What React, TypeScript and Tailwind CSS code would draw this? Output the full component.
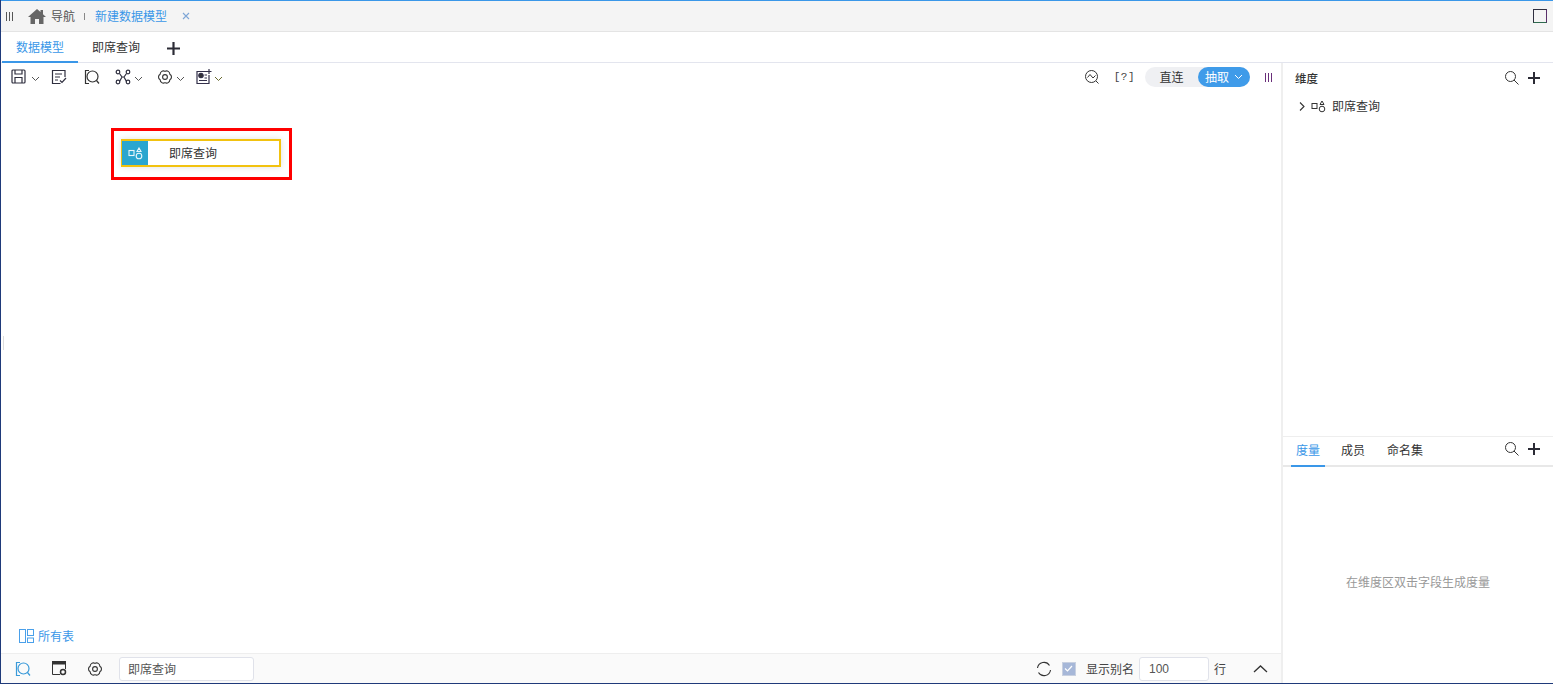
import React from "react";

const S = ({ children, w = 16, h = 16, vb = "0 0 16 16", c = "#2f2f3f", sw = 1.2 }: any) => (
  <svg width={w} height={h} viewBox={vb} fill="none" stroke={c} strokeWidth={sw} className="shrink-0">{children}</svg>
);
const Chev = ({ c = "#555" }: { c?: string }) => (
  <svg width="9" height="6" viewBox="0 0 9 6" fill="none" stroke={c} strokeWidth="1" className="shrink-0"><path d="M1 1l3.500 3.500L8 1" /></svg>
);
const Plus = ({ s = 12 }: { s?: number }) => (
  <svg width={s} height={s} viewBox="0 0 12 12" fill="none" stroke="#2b2b35" strokeWidth="2" className="shrink-0"><path d="M6 0v12M0 6h12" /></svg>
);
const Search = () => (
  <S w={14} h={14} vb="0 0 14 14" c="#333" sw={1}><circle cx="5.500" cy="5.500" r="5" /><path d="M9 9l4.500 4.500" /></S>
);
const Bars = ({ c = "#555" }: { c?: string }) => (
  <svg width="8" height="9" viewBox="0 0 8 9" fill={c} className="shrink-0"><rect x="0" width="1" height="9" /><rect x="3" width="1" height="9" /><rect x="6" width="1" height="9" /></svg>
);
const Query = ({ c = "#333" }: { c?: string }) => (
  <S c={c} sw={1.2}><path d="M5 1.500H1.500v13H5" /><circle cx="8.500" cy="7.500" r="5.500" /><path d="M12.500 11.500l2.500 3" /></S>
);
const Gear = ({ c = "#333" }: { c?: string }) => (
  <S c={c} sw={1.1}><path d="M8 2.400A3.200 3.200 0 0 1 12.850 5.200A3.200 3.200 0 0 1 12.850 10.800A3.200 3.200 0 0 1 8 13.600A3.200 3.200 0 0 1 3.150 10.800A3.200 3.200 0 0 1 3.150 5.200A3.200 3.200 0 0 1 8 2.400z" strokeLinejoin="round" /><circle cx="8" cy="8" r="2.400" /></S>
);
const Shapes = ({ c = "#333", sw = 1 }: { c?: string; sw?: number }) => (
  <S w={15} h={13} vb="0 0 15 13" c={c} sw={sw}><rect x="1" y="3.500" width="5" height="5" /><circle cx="11" cy="9" r="2.800" /><path d="M11 1l2 3.500H9z" /></S>
);

export default function App() {
  return (
    <div className="h-[684px] w-[1553px] overflow-hidden flex flex-col bg-white border-l border-b border-[#1f3a7a] text-[12px] text-[#333]" style={{ fontFamily: '"Noto Sans CJK SC", "Noto Sans", sans-serif' }}>
      <div className="h-px bg-[#3a97e8] shrink-0 -ml-px" />
      {/* title bar */}
      <div className="h-[31px] shrink-0 bg-[#f4f4f4] border-b border-[#e4e4e4] flex items-center pl-[5px] pr-[5px]">
        <Bars />
        <svg width="18" height="15" viewBox="0 0 18 15" fill="#666" className="ml-[14px] shrink-0"><path d="M9 0L0 8h2.500v7h4.500v-5h4v5h4.500V8H18l-3-2.700V1h-2.500v2.100z" /></svg>
        <span className="ml-[5px] text-[#555]">导航</span>
        <span className="ml-[9px] w-px h-[7px] bg-[#888]" />
        <span className="ml-[10px] text-[#3a97e8]">新建数据模型</span>
        <svg width="8" height="8" viewBox="0 0 8 8" stroke="#7ea6d6" strokeWidth="1.100" className="ml-[15px] shrink-0"><path d="M1 1l6 6M7 1L1 7" /></svg>
        <span className="ml-auto w-[14px] h-[14px] mr-px border border-[#2f2f3f] border-r-[#5a2f6a] border-b-[#2f6a4f]" />
      </div>
      {/* tabs */}
      <div className="h-[31px] shrink-0 flex items-stretch border-b border-[#e3e5ee]">
        <div className="w-[76px] ml-px flex items-center justify-center text-[#3a97e8] border-b-2 border-[#3a97e8] -mb-px">数据模型</div>
        <div className="w-[76px] flex items-center justify-center text-[#333]">即席查询</div>
        <div className="flex items-center ml-[13px] pt-[2px]"><Plus s={13} /></div>
      </div>
      <div className="flex-1 min-h-0 flex">
        {/* main */}
        <div className="flex-1 min-w-0 flex flex-col">
          <div className="h-[31px] shrink-0 flex items-center pl-[10px] pr-[8px] pb-[3px]">
            <S><rect x="1" y="1" width="13" height="13" rx="1" /><path d="M4 1v4h7V1M4 14V8.500h7V14" /></S>
            <span className="ml-[4px] pt-[4px]"><Chev /></span>
            <span className="ml-[11px]"><S><path d="M14 8V1.500H1.500v13h8M4 5h7M4 8h5M4 11h3" /><path d="M9 11.500l2 2 4-4.500" /></S></span>
            <span className="ml-[17px]"><Query /></span>
            <span className="ml-[15px]"><S><circle cx="3" cy="3" r="1.800" /><circle cx="13" cy="3" r="1.800" /><circle cx="3" cy="13" r="1.800" /><circle cx="13" cy="13" r="1.800" /><path d="M4.500 4.500L7 8l-2.500 4.500M11.500 4.500L9 8l2.500 4.500M7 8h2" /></S></span>
            <span className="ml-[3px] pt-[4px]"><Chev /></span>
            <span className="ml-[14px]"><Gear /></span>
            <span className="ml-[3px] pt-[4px]"><Chev /></span>
            <span className="ml-[11px]"><S c="#33304a"><path d="M11 2.500H1v12h12V6" /><path d="M13 0v5M10.500 2.500h5" /><circle cx="5" cy="6.500" r="2.200" fill="#333" /><path d="M8.500 6h2.500M8.500 9H11M3 11.500h8" /></S></span>
            <span className="ml-[2px] pt-[4px]"><Chev c="#6a6a30" /></span>

            <div className="ml-auto flex items-center">
              <S c="#333" sw={1}><circle cx="7.500" cy="7.500" r="6" /><path d="M3.500 8.500L6 5.500 9 9l2.500-2.500M12 12l2.500 2.500" /></S>
              <span className="ml-[14px] text-[11px] text-[#444] tracking-[0.500px]" style={{ fontFamily: '"Liberation Mono", monospace' }}>[?]</span>
              <div className="ml-[10px] w-[105px] h-[20px] rounded-full bg-[#eff0f3] flex items-center">
                <span className="w-[53px] text-center text-[#333]">直连</span>
                <span className="w-[52px] h-[20px] rounded-full bg-[#3f9be9] text-white flex items-center justify-center gap-[5px]">抽取<Chev c="#fff" /></span>
              </div>
              <span className="ml-[15px]"><Bars c="#6a2f7a" /></span>
            </div>
          </div>
          <div className="flex-1 min-h-0 relative">
            <div className="absolute left-[2px] top-[242px] w-px h-[14px] bg-[#dddddd]" />
            {/* node on the canvas */}
            <div className="absolute left-[110px] top-[34px] w-[181px] h-[52px] border-[3px] border-[#ff0000]" />
            <div className="absolute left-[120px] top-[45px] w-[160px] h-[28px] border-2 border-l border-[#f2c20f] flex items-center bg-white shadow-[0_0_6px_rgba(0,0,0,0.12)]">
              <div className="w-[26px] h-full bg-[#2aa6cf] flex items-center justify-center"><Shapes c="#e8f6fb" sw={1.100} /></div>
              <span className="ml-[21px] text-[#333]">即席查询</span>
            </div>
            <div className="absolute left-[18px] bottom-[8px] flex items-center gap-[4px] text-[#3a97e8]">
              <svg width="15" height="14" viewBox="0 0 15 14" fill="none" stroke="#4aa0ea" strokeWidth="1"><rect x="0.500" y="0.500" width="6" height="13" /><rect x="8.500" y="0.500" width="6" height="6" /><rect x="8.500" y="9" width="6" height="4.500" /></svg>
              <span>所有表</span>
            </div>
          </div>
          <div className="h-[30px] shrink-0 bg-[#fafafa] border-t border-[#eeeeee] flex items-center pl-[14px] pr-[13px]">
            <Query c="#3a9ad9" />
            <span className="ml-[21px]"><svg width="15" height="15" viewBox="0 0 15 15" fill="none" stroke="#333" strokeWidth="1"><path d="M8 13.500H.5v-13h13V8" /><rect x="0" y="0" width="14" height="3.500" fill="#333" stroke="none" /><circle cx="11" cy="11" r="2.500" strokeWidth="1.500" /></svg></span>
            <span className="ml-[20px]"><Gear /></span>
            <div className="ml-[16px] w-[135px] h-[24px] bg-white border border-[#e0e2ea] rounded-[3px] flex items-center pl-[8px] text-[#555]">即席查询</div>
            <div className="ml-auto flex items-center">
              <svg width="16" height="16" viewBox="0 0 16 16" fill="none" stroke="#333" strokeWidth="1.100"><path d="M1.500 7A6.500 6.500 0 0 1 13.500 4.500M14.500 9A6.500 6.500 0 0 1 2.500 11.500" /></svg>
              <span className="ml-[10px] w-[14px] h-[14px] bg-[#a6b7d8] border border-[#c8d0e0] flex items-center justify-center">
                <svg width="9" height="7" viewBox="0 0 9 7" fill="none" stroke="#fff" strokeWidth="1.200"><path d="M1 3.500l2.500 2.500L8 1" /></svg>
              </span>
              <span className="ml-[10px] text-[#444]">显示别名</span>
              <div className="ml-[5px] w-[70px] h-[24px] bg-white border border-[#e0e2ea] rounded-[3px] flex items-center pl-[9px] text-[#555]" style={{ fontFamily: '"Liberation Sans", sans-serif' }}>100</div>
              <span className="ml-[5px] text-[#444]">行</span>
              <svg width="15" height="8" viewBox="0 0 15 8" fill="none" stroke="#333" strokeWidth="1.300" className="ml-[27px]"><path d="M1 7l6.500-6L14 7" /></svg>
            </div>
          </div>
        </div>
        {/* right panel */}
        <div className="w-[272px] shrink-0 border-l-2 border-[#efefef] flex flex-col">
          <div className="h-[374px] shrink-0 border-b border-[#eeeeee]">
            <div className="h-[30px] flex items-center pl-[12px] pr-[13px]">
              <span className="font-medium text-[#333] text-[11.500px] pt-[2px]">维度</span>
              <span className="ml-auto"><Search /></span>
              <span className="ml-[9px]"><Plus /></span>
            </div>
            <div className="flex items-center pl-[16px] h-[20px] mt-[3px]">
              <svg width="6" height="9" viewBox="0 0 6 9" fill="none" stroke="#333" strokeWidth="1.100"><path d="M1 .5l4 4-4 4" /></svg>
              <span className="ml-[6px]"><Shapes /></span>
              <span className="ml-[6px] text-[#333]">即席查询</span>
            </div>
          </div>
          <div className="h-[30px] shrink-0 flex items-stretch border-b-2 border-[#e8e8e8] pl-[8px] pr-[13px]">
            <div className="w-[34px] flex items-center justify-center text-[#3a97e8] border-b-2 border-[#3a97e8] -mb-[2px] pb-[2px]">度量</div>
            <div className="ml-[16px] flex items-center pb-[2px]">成员</div>
            <div className="ml-[22px] flex items-center pb-[2px]">命名集</div>
            <div className="ml-auto flex items-center gap-[9px] pb-[4px]"><Search /><Plus /></div>
          </div>
          <div className="flex-1 min-h-0 flex items-center justify-center text-[#999] pt-[14px]">在维度区双击字段生成度量</div>
        </div>
      </div>
    </div>
  );
}
